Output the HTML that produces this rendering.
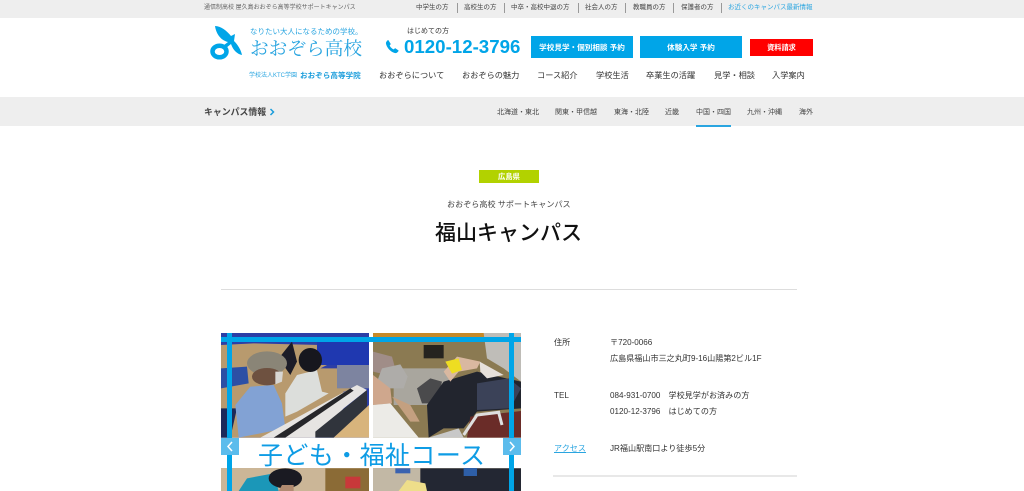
<!DOCTYPE html>
<html lang="ja"><head><meta charset="utf-8"><title>福山キャンパス</title>
<style>
*{box-sizing:border-box}
html,body{margin:0;padding:0;width:1024px;height:491px;overflow:hidden;background:#fff}
body{position:relative;font-family:"Liberation Sans","Noto Sans CJK JP",sans-serif;color:#444}
.a{position:absolute;white-space:nowrap;line-height:1}
.bar{position:absolute;left:0;width:1024px;background:#eee}
.t{font-size:6.5px;color:#444;top:5px}
.sep{position:absolute;top:3px;width:1px;height:10px;background:#999}
.n{font-size:8.2px;color:#333;top:72px}
.s{font-size:7px;color:#444;top:109px}
.btn{position:absolute;background:#00a5e8;color:#fff;font-size:7.6px;text-align:center;font-weight:bold}
.d{font-size:8.1px;color:#333}
</style></head><body>
<div class="bar" style="top:0;height:18px"></div>
<div class="a" style="left:204px;top:5px;font-size:6px;color:#666">通信制高校 屋久島おおぞら高等学校サポートキャンパス</div>
<div class="a t" style="left:416px">中学生の方</div><div class="sep" style="left:457px"></div>
<div class="a t" style="left:464px">高校生の方</div><div class="sep" style="left:504px"></div>
<div class="a t" style="left:511px">中卒・高校中退の方</div><div class="sep" style="left:578px"></div>
<div class="a t" style="left:585px">社会人の方</div><div class="sep" style="left:625px"></div>
<div class="a t" style="left:633px">教職員の方</div><div class="sep" style="left:673px"></div>
<div class="a t" style="left:681px">保護者の方</div><div class="sep" style="left:721px"></div>
<div class="a t" style="left:728px;color:#2aa5e0">お近くのキャンパス最新情報</div>

<svg style="position:absolute;left:208px;top:24px" width="36" height="38" viewBox="0 0 36 38">
<ellipse cx="11.500" cy="27.500" rx="7" ry="5.800" fill="none" stroke="#00a5e8" stroke-width="4.500"/>
<path d="M7 2C13 2 19 7 23 12L27 10L26 17C30 21 33 26 34 31C29 30 25 26 23 20L18 24L16 21L20 18C12 16 8 9 7 2Z" fill="#00a5e8"/>
</svg>
<div class="a" style="left:250px;top:28px;font-size:7.500px;color:#2aa5e0">なりたい大人になるための学校。</div>
<div class="a" style="left:250px;top:41px;font-size:18.700px;color:#2aa5e0;font-family:'Liberation Serif','Noto Serif CJK SC',serif">おおぞら高校</div>
<div class="a" style="left:249px;top:73px;font-size:6px;color:#2aa5e0">学校法人KTC学園</div>
<div class="a" style="left:300px;top:72px;font-size:7.600px;color:#1b9ddb;font-weight:bold">おおぞら高等学院</div>

<div class="a" style="left:407px;top:28px;font-size:7px;color:#333">はじめての方</div>
<svg style="position:absolute;left:385px;top:39px" width="15" height="15" viewBox="0 0 16 16"><path d="M3.500 1L6 5C6.200 5.600 5.800 6 5 6.800C5.500 8.500 7.500 10.500 9.300 11L10.800 9.700L14.500 12.300C14.600 13 13 15 11.500 15C6.500 14.500 1.500 9 1 4.500C1 3 2.500 1.300 3.500 1Z" fill="#00a5e8"/></svg>
<div class="a" style="left:404px;top:38px;font-size:18.700px;font-weight:bold;color:#00a5e8">0120-12-3796</div>
<div class="btn" style="left:531px;top:36px;width:102px;height:22px;line-height:24px">学校見学・個別相談 予約</div>
<div class="btn" style="left:640px;top:36px;width:102px;height:22px;line-height:24px">体験入学 予約</div>
<div class="btn" style="left:750px;top:39px;width:63px;height:17px;line-height:18px;background:#f00;font-size:7.200px">資料請求</div>

<div class="a n" style="left:379px">おおぞらについて</div>
<div class="a n" style="left:462px">おおぞらの魅力</div>
<div class="a n" style="left:537px">コース紹介</div>
<div class="a n" style="left:596px">学校生活</div>
<div class="a n" style="left:646px">卒業生の活躍</div>
<div class="a n" style="left:714px">見学・相談</div>
<div class="a n" style="left:772px">入学案内</div>

<div class="bar" style="top:97px;height:29px;background:#eee"></div>
<div class="a" style="left:204px;top:108px;font-size:8.900px;font-weight:bold;color:#444">キャンパス情報</div>
<svg style="position:absolute;left:269px;top:108px" width="6" height="8" viewBox="0 0 6 8"><path d="M1.500 1L4.500 4L1.500 7" fill="none" stroke="#1b9ddb" stroke-width="1.500"/></svg>
<div class="a s" style="left:497px">北海道・東北</div>
<div class="a s" style="left:555px">関東・甲信越</div>
<div class="a s" style="left:614px">東海・北陸</div>
<div class="a s" style="left:665px">近畿</div>
<div class="a s" style="left:696px">中国・四国</div>
<div class="a s" style="left:747px">九州・沖縄</div>
<div class="a s" style="left:799px">海外</div>
<div style="position:absolute;left:696px;top:125px;width:35px;height:2px;background:#2aa5e0"></div>

<div class="a" style="left:479px;top:170px;width:60px;height:13px;background:#b2d200;color:#fff;font-size:7.300px;font-weight:bold;text-align:center;line-height:13px">広島県</div>
<div class="a" style="left:447px;top:201px;font-size:8.100px;color:#444">おおぞら高校 サポートキャンパス</div>
<div class="a" style="left:435px;top:223px;font-size:21px;color:#111;font-weight:500">福山キャンパス</div>
<div style="position:absolute;left:221px;top:289px;width:576px;height:1px;background:#ddd"></div>

<svg style="position:absolute;left:221px;top:333px" width="300" height="158" viewBox="0 0 300 158">
<rect width="300" height="158" fill="#fff"/>
<g transform="translate(-10.670 -8) scale(.33333)">
<rect x="32" y="24" width="444" height="314" fill="#2c3ea6"/>
<path d="M32 60L130 55L330 60L400 95L330 130L476 130V180L400 200L300 338H32Z" fill="#b89a6e"/>
<rect x="380" y="120" width="96" height="70" fill="#7d84a0"/>
<rect x="320" y="50" width="156" height="70" fill="#1f38b0"/>
<path d="M32 130L110 125L115 175L32 190Z" fill="#2c4fa5"/>
<path d="M60 338L32 338L32 250L80 250Z" fill="#1c2a5a"/>
<path d="M205 100L245 50L260 110L240 150Z" fill="#1c1c28"/>
<path d="M85 338L75 240L120 185L190 180L215 235L225 310Z" fill="#82a2d4"/>
<ellipse cx="170" cy="115" rx="60" ry="36" fill="#8a8577"/>
<ellipse cx="170" cy="155" rx="45" ry="26" fill="#6e5140"/>
<path d="M195 140L218 140L215 170L195 178Z" fill="#d8d6d2"/>
<path d="M225 275L225 205L260 150L320 135L335 200L355 205L260 260Z" fill="#dcdedb"/>
<ellipse cx="300" cy="105" rx="35" ry="36" fill="#17171e"/>
<path d="M150 338L440 180L470 195L400 250L320 338Z" fill="#e6e4e2"/>
<path d="M190 338L420 190L430 197L225 338Z" fill="#26262a"/>
<path d="M315 320L470 195V250L370 338H315Z" fill="#30343c"/>
<path d="M370 338L476 240V338Z" fill="#d8b47c"/>
<rect x="488" y="24" width="444" height="314" fill="#8b7a52"/>
<rect x="488" y="24" width="340" height="12" fill="#c78a28"/>
<path d="M550 130H720V240H550Z" fill="#a9a69e"/>
<rect x="640" y="60" width="60" height="40" fill="#25231f"/>
<path d="M488 80L545 95L560 150L530 150L488 140Z" fill="#a08d88"/>
<path d="M515 130L570 118L592 155L580 190L530 190L500 170Z" fill="#aeaca9"/>
<path d="M488 150L540 190L545 235L488 240Z" fill="#cfa78d"/>
<path d="M488 240L540 235L625 338H488Z" fill="#ecebe7"/>
<path d="M545 215L600 240L628 290L600 290Z" fill="#c4a080"/>
<path d="M620 190L660 160L695 170L680 235L635 235Z" fill="#4a4a4c"/>
<path d="M655 338L650 240L700 170L800 140L932 170V250L800 260L760 310L700 310Z" fill="#22252e"/>
<path d="M800 175L895 160L932 190L900 250L800 255Z" fill="#3b4258"/>
<path d="M820 24H932V170L880 130L830 100Z" fill="#bfbdb8"/>
<path d="M808 110L880 150L830 160L810 140Z" fill="#e6e0da"/>
<path d="M740 95L810 110L800 130L745 140L720 170L700 140Z" fill="#d9b8a0"/>
<path d="M705 110L745 100L755 135L725 146Z" fill="#eedd22"/>
<path d="M770 338L780 275L932 258V338Z" fill="#6a2c28"/>
<path d="M760 330L800 270L865 262L875 300" fill="none" stroke="#dedede" stroke-width="9"/>
<path d="M655 338L745 310L760 338Z" fill="#c8c8c8"/>
<rect x="32" y="428" width="444" height="70" fill="#cbb697"/>
<rect x="345" y="430" width="131" height="68" fill="#8b6b36"/>
<rect x="405" y="455" width="45" height="35" fill="#c8383a"/>
<path d="M85 498L110 460L190 445L205 498Z" fill="#1b97b8"/>
<ellipse cx="225" cy="460" rx="50" ry="30" fill="#1a1a22"/>
<path d="M205 498L215 480L250 480L250 498Z" fill="#b08a70"/>
<rect x="488" y="428" width="444" height="70" fill="#c2b8a5"/>
<rect x="630" y="430" width="302" height="68" fill="#232733"/>
<rect x="555" y="430" width="45" height="15" fill="#3a62b0"/>
<path d="M565 498L590 465L645 475L650 498Z" fill="#eede8a"/>
<rect x="760" y="428" width="40" height="25" fill="#2e5fa8"/>
</g>
<rect x="148" y="0" width="4" height="158" fill="#fff"/>
<rect x="0" y="105" width="300" height="30" fill="#fff"/>
<rect x="0" y="4" width="300" height="5" fill="#00a5e8"/>
<rect x="6" y="0" width="5" height="158" fill="#00a5e8"/>
<rect x="288" y="0" width="5" height="158" fill="#00a5e8"/>
<text x="37" y="131" font-size="25" fill="#0e9ce5" font-family="Liberation Sans,Noto Sans CJK JP,sans-serif" textLength="227">子ども・福祉コース</text>
<rect x="0" y="105" width="18" height="17" fill="#5cbcec"/>
<rect x="282" y="105" width="18" height="17" fill="#5cbcec"/>
<path d="M11 109L7 113.500L11 118" fill="none" stroke="#fff" stroke-width="1.500"/>
<path d="M289 109L293 113.500L289 118" fill="none" stroke="#fff" stroke-width="1.500"/>
</svg>

<div class="a d" style="left:554px;top:339px">住所</div>
<div class="a d" style="left:610px;top:339px">〒720-0066</div>
<div class="a d" style="left:610px;top:355px">広島県福山市三之丸町9-16山陽第2ビル1F</div>
<div class="a d" style="left:554px;top:392px">TEL</div>
<div class="a d" style="left:610px;top:392px">084-931-0700　学校見学がお済みの方</div>
<div class="a d" style="left:610px;top:408px">0120-12-3796　はじめての方</div>
<div class="a d" style="left:554px;top:445px;color:#2aa5e0;text-decoration:underline">アクセス</div>
<div class="a d" style="left:610px;top:445px">JR福山駅南口より徒歩5分</div>
<div style="position:absolute;left:553px;top:475px;width:244px;height:2px;background:#e8e8e8"></div>
</body></html>
